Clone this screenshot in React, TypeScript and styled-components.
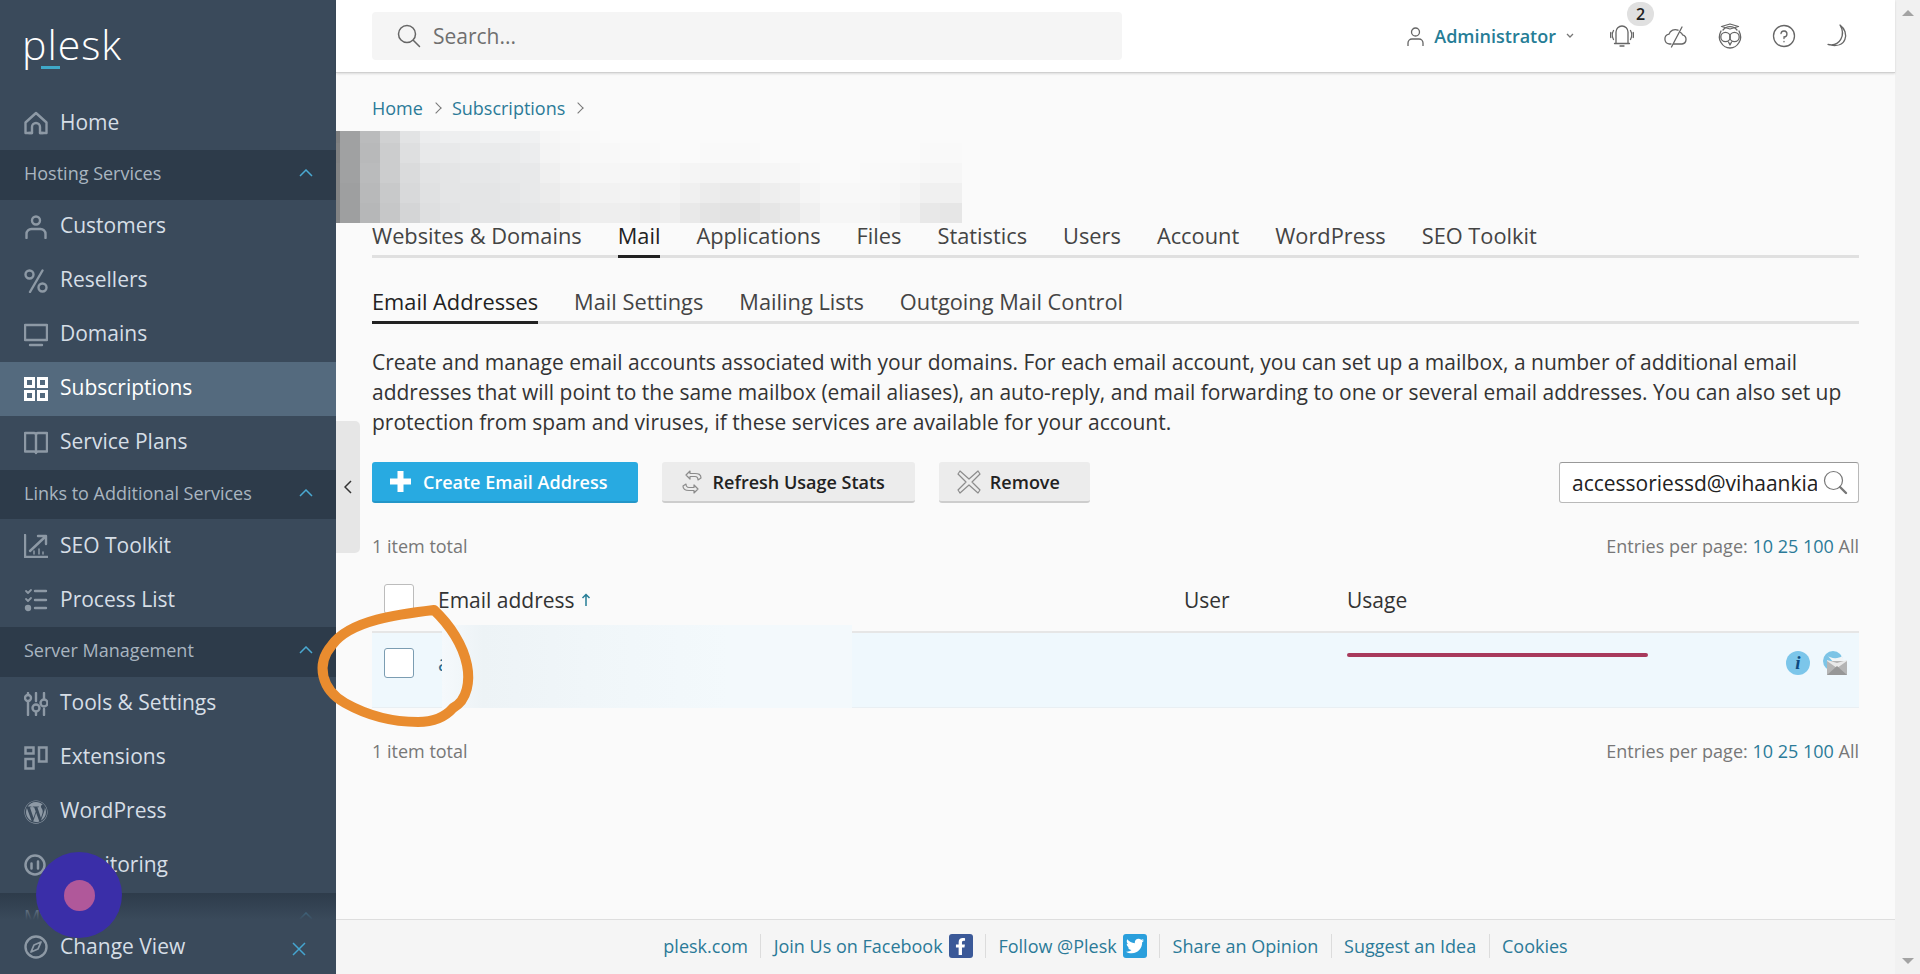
import styled, {createGlobalStyle} from 'styled-components';
import {FaFacebookF, FaTwitter, FaWordpress} from 'react-icons/fa';
import type {ReactNode} from 'react';

const GlobalStyle = createGlobalStyle`
	* {
		box-sizing: border-box;
	}

	html,
	body {
		margin: 0;
		height: 100%;
		overflow: hidden;
	}

	body {
		font-family: 'Open Sans', 'Liberation Sans', sans-serif;
		font-size: 21px;
		line-height: 30px;
		color: #222;
		background: #fafafa;
	}
`;

const Svg = ({size = 24, children}: {size?: number; children: ReactNode}) => (
	<svg
		width={size}
		height={size}
		viewBox="0 0 24 24"
		fill="none"
		stroke="currentColor"
		strokeWidth="2.400"
		strokeLinecap="round"
		strokeLinejoin="round"
	>
		{children}
	</svg>
);

const HomeIcon = () => (
	<Svg>
		<path d="M1.500 11.500 12 2l10.500 9.500V22H16v-6a4 4 0 0 0-8 0v6H1.500z" />
		<path d="M5 22h3M16 22h3" />
	</Svg>
);
const CustomersIcon = () => (
	<Svg>
		<circle cx="12" cy="5.500" r="4" />
		<path d="M2.500 23v-4a5 5 0 0 1 5-5h9a5 5 0 0 1 5 5v4" />
	</Svg>
);
const PercentIcon = () => (
	<Svg>
		<circle cx="5.500" cy="5.500" r="4" />
		<circle cx="18.500" cy="18.500" r="4" />
		<path d="M18.500 1.500 6 23" />
	</Svg>
);
const MonitorIcon = () => (
	<Svg>
		<rect x="1" y="2" width="22" height="15" />
		<path d="M6 22h12" />
	</Svg>
);
const GridIcon = () => (
	<Svg>
		<g strokeWidth="3" strokeLinecap="butt" strokeLinejoin="miter">
			<rect x="1.500" y="1.500" width="8" height="8" />
			<rect x="14.500" y="1.500" width="8" height="8" />
			<rect x="1.500" y="14.500" width="8" height="8" />
			<rect x="14.500" y="14.500" width="8" height="8" />
		</g>
	</Svg>
);
const BookIcon = () => (
	<Svg>
		<path d="M1 2h9a2 2 0 0 1 2 2v18a2 2 0 0 0-2-1.500H1zM23 2h-9a2 2 0 0 0-2 2v18a2 2 0 0 1 2-1.500h9z" />
	</Svg>
);
const ChartIcon = () => (
	<Svg>
		<path d="M1 1v22h23" />
		<path d="M6 17 21 3M14 2h8v8" />
		<path d="M10 20v-3M15 20v-5M19 20v-2" strokeWidth="1.500" />
	</Svg>
);
const ChecklistIcon = () => (
	<Svg>
		<path d="m2 3 2 2 3-3M2 11l2 2 3-3" strokeWidth="1.800" />
		<circle cx="4" cy="20" r="2" fill="currentColor" />
		<path d="M11 3h11M11 12h11M11 20h11" />
	</Svg>
);
const SlidersIcon = () => (
	<Svg>
		<path d="M4 10v13M12 1v8M12 20v3M20 1v5M20 17v6M4 1v2" />
		<circle cx="4" cy="6" r="3" />
		<circle cx="12" cy="16" r="3.500" />
		<circle cx="20" cy="11" r="3.500" />
	</Svg>
);
const ExtensionsIcon = () => (
	<Svg>
		<g strokeWidth="2.500" strokeLinecap="butt" strokeLinejoin="miter">
			<rect x="1.500" y="1.500" width="8" height="6" />
			<rect x="1.500" y="13" width="8" height="9.500" />
			<rect x="15" y="1.500" width="7.500" height="14" />
		</g>
	</Svg>
);
const MonitoringIcon = () => (
	<Svg>
		<circle cx="11" cy="11" r="9.500" strokeWidth="2.500" />
		<path d="M7.500 9.500v5M14 7.500v7" strokeWidth="2.500" />
	</Svg>
);
const CompassIcon = () => (
	<Svg>
		<circle cx="12" cy="12" r="10.500" />
		<path d="m17 7-3 7-7 3 3-7z" strokeWidth="1.800" />
	</Svg>
);

type NavEntry =
	| {kind: 'item'; label: string; icon: ReactNode; active?: boolean}
	| {kind: 'section'; label: string};

const navEntries: NavEntry[] = [
	{kind: 'item', label: 'Home', icon: <HomeIcon />},
	{kind: 'section', label: 'Hosting Services'},
	{kind: 'item', label: 'Customers', icon: <CustomersIcon />},
	{kind: 'item', label: 'Resellers', icon: <PercentIcon />},
	{kind: 'item', label: 'Domains', icon: <MonitorIcon />},
	{kind: 'item', label: 'Subscriptions', icon: <GridIcon />, active: true},
	{kind: 'item', label: 'Service Plans', icon: <BookIcon />},
	{kind: 'section', label: 'Links to Additional Services'},
	{kind: 'item', label: 'SEO Toolkit', icon: <ChartIcon />},
	{kind: 'item', label: 'Process List', icon: <ChecklistIcon />},
	{kind: 'section', label: 'Server Management'},
	{kind: 'item', label: 'Tools & Settings', icon: <SlidersIcon />},
	{kind: 'item', label: 'Extensions', icon: <ExtensionsIcon />},
	{kind: 'item', label: 'WordPress', icon: <FaWordpress size={24} />},
	{kind: 'item', label: 'Monitoring', icon: <MonitoringIcon />},
	{kind: 'section', label: 'My Profile'},
];

const mainTabs = ['Websites & Domains', 'Mail', 'Applications', 'Files', 'Statistics', 'Users', 'Account', 'WordPress', 'SEO Toolkit'];
const subTabs = ['Email Addresses', 'Mail Settings', 'Mailing Lists', 'Outgoing Mail Control'];

// grey levels of the pixelated title, one line per column of 20px
const blurColumns = [
	[125, 128, 130, 130, 130],
	[160, 160, 160, 158, 158],
	[186, 184, 186, 184, 182],
	[208, 204, 204, 200, 198],
	[226, 222, 218, 216, 212],
	[236, 232, 226, 224, 222],
	[238, 232, 228, 228, 226],
	[238, 234, 230, 228, 228],
	[240, 234, 230, 228, 228],
	[240, 234, 232, 230, 228],
	[240, 236, 232, 232, 230],
	[246, 244, 240, 236, 232],
	[248, 246, 244, 240, 236],
	[249, 248, 246, 242, 238],
	[250, 248, 246, 242, 238],
	[250, 249, 246, 243, 238],
	[250, 249, 246, 242, 236],
	[250, 250, 247, 243, 238],
	[250, 250, 245, 240, 233],
	[250, 249, 244, 236, 228],
	[250, 249, 244, 234, 226],
	[250, 249, 245, 235, 226],
	[250, 250, 246, 238, 230],
	[250, 250, 247, 240, 234],
	[250, 250, 249, 245, 240],
	[250, 250, 250, 248, 246],
	[250, 250, 250, 248, 246],
	[250, 250, 249, 248, 246],
	[250, 250, 249, 247, 244],
	[250, 250, 248, 244, 240],
	[250, 249, 246, 240, 232],
	[250, 249, 246, 240, 230],
	[250, 249, 246, 240, 230],
];

const blurColor = (grey: number, column: number) => {
	const tint = column < 11 ? 2 : 0;
	return `rgb(${grey},${grey + tint / 2},${grey + tint})`;
};

const EntriesPerPage = () => (
	<Entries>
		Entries per page: <a>10</a> <a>25</a> <a>100</a> All
	</Entries>
);

function App() {
	return (
		<>
			<GlobalStyle />
			<Page>
				<Sidebar>
					<Nav>
						<Logo>
							plesk
							<LogoMark />
						</Logo>
						{navEntries.map(entry =>
							entry.kind === 'section' ? (
								<Section key={entry.label}>
									{entry.label}
									<svg width="14" height="8" viewBox="0 0 14 8" fill="none" stroke="currentColor" strokeWidth="1.500">
										<path d="m1 7 6-6 6 6" />
									</svg>
								</Section>
							) : (
								<Item key={entry.label} $active={entry.active}>
									<ItemIcon $active={entry.active}>{entry.icon}</ItemIcon>
									{entry.label}
								</Item>
							),
						)}
					</Nav>
					<SidebarFooter>
						<Item as="div">
							<ItemIcon>
								<CompassIcon />
							</ItemIcon>
							Change View
						</Item>
						<CloseIcon width="14" height="14" viewBox="0 0 14 14" fill="none" stroke="currentColor" strokeWidth="1.500">
							<path d="m1 1 12 12M13 1 1 13" />
						</CloseIcon>
					</SidebarFooter>
				</Sidebar>

				<Main>
					<Header>
						<SearchBox>
							<svg width="26" height="26" viewBox="0 0 26 26" fill="none" stroke="#666" strokeWidth="1.500" strokeLinecap="round">
								<circle cx="11" cy="11" r="8.500" />
								<path d="m17.500 17.500 6 6" />
							</svg>
							Search...
						</SearchBox>
						<HeaderRight>
							<UserMenu>
								<svg width="17" height="19" viewBox="0 0 17 19" fill="none" stroke="#666" strokeWidth="1.300">
									<circle cx="8.500" cy="5" r="4" />
									<path d="M1 19v-3a4 4 0 0 1 4-4h7a4 4 0 0 1 4 4v3" />
								</svg>
								<UserName>Administrator</UserName>
								<svg width="8" height="6" viewBox="0 0 8 6" fill="none" stroke="#777" strokeWidth="1.300">
									<path d="m1 1 3 3 3-3" />
								</svg>
							</UserMenu>
							<HeaderIcons>
								<BellWrap>
									<svg width="24" height="24" viewBox="0 0 24 24" fill="none" stroke="#666" strokeWidth="1.300" strokeLinecap="round">
										<path d="M6 19V8a6 6 0 0 1 12 0v11M4.500 19.500h15M10 22h4" />
										<path d="M3.500 6.500a9 9 0 0 0 0 9M.8 8.500a7 7 0 0 0 0 5M20.500 6.500a9 9 0 0 1 0 9M23.200 8.500a7 7 0 0 1 0 5" />
									</svg>
									<Badge>2</Badge>
								</BellWrap>
								<svg width="24" height="24" viewBox="0 0 24 24" fill="none" stroke="#666" strokeWidth="1.300" strokeLinecap="round">
									<path d="M7 20H5.500a5 5 0 0 1-.5-9.900A6.500 6.500 0 0 1 14 6.200M16.500 8.500a5 5 0 0 1 2 2.300 4.700 4.700 0 0 1-.5 9.200H9.500" />
									<path d="M18 3 7.500 23" />
								</svg>
								<svg width="24" height="26" viewBox="0 0 24 26" fill="none" stroke="#666" strokeWidth="1.300" strokeLinecap="round" strokeLinejoin="round">
									<path d="M3.500 3.500 12 1l8.500 2.500L12 6zM5 7a9 9 0 0 1 14 0" />
									<path d="M3 8c-2 4-2.500 8 0 11.500C5 23 9 25 12 25s7-2 9-5.500c2.500-3.500 2-7.500 0-11.500" />
									<circle cx="7.500" cy="14" r="4.700" />
									<circle cx="16.500" cy="14" r="4.700" />
									<path d="m10.500 19 1.500 3 1.500-3" />
								</svg>
								<HelpIcon>
									<svg width="24" height="24" viewBox="0 0 24 24" fill="none" stroke="#666" strokeWidth="1.300" strokeLinecap="round">
										<circle cx="12" cy="12" r="10.500" />
										<path d="M9 9.500A3 3 0 1 1 12 13v1.500M12 17.500v.3" />
									</svg>
								</HelpIcon>
								<svg width="24" height="24" viewBox="0 0 24 24" fill="none" stroke="#666" strokeWidth="1.300" strokeLinejoin="round">
									<path d="M14 1C24 8 21 26 2 20.500 14 23 20 11 14 1z" />
								</svg>
							</HeaderIcons>
						</HeaderRight>
					</Header>

					<Content>
						<Breadcrumbs>
							<a>Home</a>
							<Crumb />
							<a>Subscriptions</a>
							<Crumb />
						</Breadcrumbs>

						<BlurredTitle>
							{blurColumns.map((column, x) =>
								column.map((grey, y) => <span key={`${x}-${y}`} style={{background: blurColor(grey, x)}} />),
							)}
						</BlurredTitle>

						<Tabs>
							{mainTabs.map(tab => (
								<Tab key={tab} $active={tab === 'Mail'}>
									{tab}
								</Tab>
							))}
						</Tabs>
						<SubTabs>
							{subTabs.map(tab => (
								<Tab key={tab} $active={tab === 'Email Addresses'}>
									{tab}
								</Tab>
							))}
						</SubTabs>

						<Intro>
							Create and manage email accounts associated with your domains. For each email account, you can set up a mailbox, a number of additional email
							addresses that will point to the same mailbox (email aliases), an auto-reply, and mail forwarding to one or several email addresses. You can also set up
							protection from spam and viruses, if these services are available for your account.
						</Intro>

						<Toolbar>
							<PrimaryButton>
								<svg width="21" height="21" viewBox="0 0 21 21" fill="#fff">
									<path d="M7.500 0h6v7.500H21v6h-7.500V21h-6v-7.500H0v-6h7.500z" />
								</svg>
								Create Email Address
							</PrimaryButton>
							<Button>
								<svg width="24" height="24" viewBox="0 0 24 24" fill="none" stroke="#8c8c8c" strokeWidth="1.200" strokeLinejoin="round">
									<path d="M10 1 6 5l4 4V6.500h5c2 0 3 1.500 3 3.500l3-2c0-4-2.500-4.500-6-4.500h-5z" />
									<path d="m14 23 4-4-4-4v2.500H9c-2 0-3-1.500-3-3.500l-3 2c0 4 2.500 4.500 6 4.500h5z" />
								</svg>
								Refresh Usage Stats
							</Button>
							<Button>
								<svg width="24" height="24" viewBox="0 0 24 24" fill="none" stroke="#8c8c8c" strokeWidth="1.200" strokeLinejoin="round">
									<path d="M3 1 12 9l9-8 2 3-8 8 8 8-2 3-9-8-9 8-2-3 8-8-8-8z" />
								</svg>
								Remove
							</Button>
							<FilterBox>
								<FilterInput readOnly value="accessoriessd@vihaankia" />
								<svg width="25" height="25" viewBox="0 0 25 25" fill="none" stroke="#777" strokeWidth="1.200" strokeLinecap="round">
									<circle cx="10.500" cy="10.500" r="9" />
									<path d="m17 17 6 6" strokeWidth="2.400" />
								</svg>
							</FilterBox>
						</Toolbar>

						<ListMeta>
							<span>1 item total</span>
							<EntriesPerPage />
						</ListMeta>

						<TableHead>
							<HeadCheckbox />
							<HeadLabel>
								Email address
								<svg width="10" height="14" viewBox="0 0 10 14" fill="none" stroke="#267d96" strokeWidth="1.500">
									<path d="M5 13V2M1.500 5 5 1.500 8.500 5" />
								</svg>
							</HeadLabel>
							<span>User</span>
							<span>Usage</span>
						</TableHead>
						<TableRow>
							<Checkbox $row />
							<EmailLink>a</EmailLink>
							<span />
							<UsageBar />
							<RowIcons>
								<InfoIcon>i</InfoIcon>
								<svg width="24" height="24" viewBox="0 0 24 24">
									<circle cx="10" cy="10" r="10" fill="#7cc4e6" />
									<path d="M4 4c3 4 12 4 15 1l3 7-9 2z" fill="#f1f5f7" />
									<path d="M4 10h20v14H4z" fill="#b5b5b5" />
									<path d="M4 10l10 7 10-7v-1L14 12 4 9z" fill="#e9e9e9" />
									<path d="M4 24l10-9 10 9z" fill="#979797" />
								</svg>
							</RowIcons>
							<RowBlur />
						</TableRow>

						<BottomMeta>
							<span>1 item total</span>
							<EntriesPerPage />
						</BottomMeta>
					</Content>

					<Footer>
						<FooterLink>plesk.com</FooterLink>
						<FooterLink>
							Join Us on Facebook
							<Social $color="#3b5998">
								<FaFacebookF size={17} />
							</Social>
						</FooterLink>
						<FooterLink>
							Follow @Plesk
							<Social $color="#2a9fdc">
								<FaTwitter size={18} />
							</Social>
						</FooterLink>
						<FooterLink>Share an Opinion</FooterLink>
						<FooterLink>Suggest an Idea</FooterLink>
						<FooterLink>Cookies</FooterLink>
					</Footer>

					<SidebarToggle>
						<svg width="8" height="14" viewBox="0 0 8 14" fill="none" stroke="#333" strokeWidth="1.500">
							<path d="M7 1 1 7l6 6" />
						</svg>
					</SidebarToggle>
				</Main>

				<Scrollbar>
					<ScrollArrow />
					<ScrollArrow $down />
				</Scrollbar>

				<Annotation width="1920" height="974" viewBox="0 0 1920 974" fill="none">
					<path
						d="M434 610C400 614 350 620 332 645 315 665 322 690 345 703 370 717 395 722 418 722 436 722 446 716 453 708 468 700 470 680 467 665 463 645 450 625 434 610"
						stroke="#e98c2f"
						strokeWidth="10"
						strokeLinecap="round"
					/>
				</Annotation>
				<RecordDot />
			</Page>
		</>
	);
}

export default App;

const Page = styled.div`
	position: relative;
	display: flex;
	width: 1920px;
	height: 974px;
	overflow: hidden;
`;

const Sidebar = styled.aside`
	position: relative;
	width: 336px;
	flex-shrink: 0;
	background: #3a4a5b;
	color: #d6dee6;
`;

const Nav = styled.nav`
	height: 974px;
`;

const Logo = styled.div`
	position: relative;
	height: 96px;
	padding: 19px 0 0 22px;
	font-size: 41px;
	line-height: 50px;
	font-weight: 300;
	letter-spacing: 1px;
	color: #fff;
`;

const LogoMark = styled.span`
	position: absolute;
	left: 41px;
	top: 66px;
	width: 19px;
	height: 3px;
	background: #3fa9c9;
`;

const Item = styled.a<{$active?: boolean}>`
	display: flex;
	align-items: center;
	gap: 12px;
	height: 54px;
	padding: 0 0 3px 24px;
	font-size: 21px;
	font-weight: 500;
	color: ${props => (props.$active ? '#fff' : '#d6dee6')};
	background: ${props => (props.$active ? '#546a7e' : 'transparent')};
`;

const ItemIcon = styled.span<{$active?: boolean}>`
	display: flex;
	width: 24px;
	height: 24px;
	margin-top: 3px;
	color: ${props => (props.$active ? '#fff' : '#8d99a5')};
`;

const Section = styled.div`
	display: flex;
	align-items: center;
	justify-content: space-between;
	height: 49.500px;
	padding: 0 23px 3px 24px;
	font-size: 18px;
	color: #a9b5c0;
	background: #2d3b4a;

	svg {
		color: #4aa9d2;
	}
`;

const SidebarFooter = styled.div`
	position: absolute;
	left: 0;
	right: 0;
	bottom: 0;
	height: 54px;
	background: #3a4a5b;

	&::before {
		content: '';
		position: absolute;
		left: 0;
		right: 0;
		bottom: 100%;
		height: 28px;
		background: linear-gradient(rgba(58, 74, 91, 0), #3a4a5b);
	}
`;

const CloseIcon = styled.svg`
	position: absolute;
	right: 30px;
	top: 22px;
	color: #45a5d0;
`;

const Main = styled.div`
	position: relative;
	flex: 1;
	min-width: 0;
	display: flex;
	flex-direction: column;
`;

const Header = styled.header`
	height: 73px;
	flex-shrink: 0;
	display: flex;
	align-items: center;
	justify-content: space-between;
	padding: 0 45px 0 36px;
	background: #fff;
	border-bottom: 1px solid #d0d0d0;
	box-shadow: 0 1px 2px rgba(0, 0, 0, 0.12);
	z-index: 1;
`;

const SearchBox = styled.div`
	display: flex;
	align-items: center;
	gap: 11px;
	width: 750px;
	height: 48px;
	padding-left: 24px;
	background: #f5f5f5;
	border-radius: 4px;
	color: #6f6f6f;
`;

const HeaderRight = styled.div`
	display: flex;
	align-items: center;
	gap: 36px;
`;

const UserMenu = styled.div`
	display: flex;
	align-items: center;
	gap: 10px;
`;

const UserName = styled.span`
	font-size: 18px;
	font-weight: 600;
	color: #267d96;
`;

const HeaderIcons = styled.div`
	display: flex;
	align-items: center;
	gap: 30px;
`;

const BellWrap = styled.div`
	position: relative;
	display: flex;
`;

const Badge = styled.span`
	position: absolute;
	left: 17px;
	top: -22px;
	width: 27px;
	height: 24px;
	border-radius: 12px;
	background: #e0e0e0;
	font-size: 16px;
	line-height: 24px;
	font-weight: 600;
	text-align: center;
`;

const HelpIcon = styled.span`
	display: flex;
`;

const Content = styled.main`
	flex: 1;
	min-height: 0;
	padding: 20px 36px 0;
	background: #fafafa;
`;

const Breadcrumbs = styled.div`
	display: flex;
	align-items: center;
	gap: 12px;
	height: 30px;
	font-size: 18px;

	a {
		color: #2b7a98;
	}
`;

const Crumb = styled.span`
	width: 8px;
	height: 8px;
	margin-left: -3px;
	border-top: 1px solid #777;
	border-right: 1px solid #777;
	transform: rotate(45deg);
`;

const BlurredTitle = styled.div`
	display: grid;
	grid-template-columns: 4px repeat(32, 20px);
	grid-template-rows: 12px repeat(4, 20px);
	grid-auto-flow: column;
	width: 626px;
	height: 92px;
	margin: 8px 0 0 -36px;
	overflow: hidden;
`;

const Tabs = styled.div`
	display: flex;
	gap: 36px;
	border-bottom: 3px solid #e0e0e0;
	font-size: 21.800px;
`;

const SubTabs = styled(Tabs)`
	margin-top: 31px;
`;

const Tab = styled.a<{$active?: boolean}>`
	height: 32px;
	margin-bottom: -3px;
	padding-bottom: 6px;
	line-height: 26px;
	font-weight: 500;
	color: ${props => (props.$active ? '#222' : '#444')};
	${props => (props.$active ? 'box-shadow: inset 0 -3px 0 #222; height: 35px;' : '')}
`;

const Intro = styled.p`
	margin: 23px 0 0;
	color: #333;
`;

const Toolbar = styled.div`
	display: flex;
	align-items: center;
	gap: 24px;
	height: 41px;
	margin-top: 25px;
`;

const Button = styled.button`
	display: flex;
	align-items: center;
	gap: 9px;
	height: 41px;
	padding: 0 30px 0 18px;
	border: 0;
	border-bottom: 2px solid #cdcdcd;
	border-radius: 3px;
	background: #ececec;
	color: #222;
	font: 600 18px 'Open Sans', sans-serif;
`;

const PrimaryButton = styled(Button)`
	border-bottom: 2px solid #2496c8;
	background: #28aae1;
	color: #fff;
	gap: 12px;
`;

const FilterBox = styled.div`
	display: flex;
	align-items: center;
	width: 300px;
	height: 41px;
	margin-left: auto;
	padding: 0 10px 0 12px;
	background: #fff;
	border: 1px solid #b9b9b9;
	border-top-color: #999;
	border-radius: 3px;
`;

const FilterInput = styled.input`
	flex: 1;
	min-width: 0;
	margin-right: 6px;
	padding: 0;
	border: 0;
	outline: 0;
	background: transparent;
	color: #222;
	font: 21px 'Open Sans', sans-serif;
`;

const ListMeta = styled.div`
	display: flex;
	justify-content: space-between;
	height: 24px;
	margin-top: 31px;
	font-size: 18px;
	line-height: 24px;
	color: #777;
`;

const Entries = styled.span`
	a {
		color: #2b7a98;
	}
`;

const BottomMeta = styled(ListMeta)`
	margin-top: 31px;
`;

const TableHead = styled.div`
	display: grid;
	grid-template-columns: 54px 746px 163px 1fr;
	align-items: center;
	height: 64px;
	margin-top: 11px;
	padding-left: 12px;
	border-bottom: 2px solid #e6e6e6;
	color: #333;
`;

const HeadLabel = styled.span`
	display: flex;
	align-items: center;
	gap: 6px;
`;

const TableRow = styled.div`
	position: relative;
	display: grid;
	grid-template-columns: 54px 746px 163px 301px 1fr;
	align-items: start;
	height: 75px;
	padding-left: 12px;
	background: #eff8fd;
	border-bottom: 1px solid #e9eff3;
`;

const Checkbox = styled.span<{$row?: boolean}>`
	display: block;
	width: 30px;
	height: 30px;
	margin-top: ${props => (props.$row ? '15px' : '0')};
	background: #fff;
	border: 1px solid ${props => (props.$row ? '#7b9db2' : '#bcbcbc')};
	border-radius: 3px;
`;

const HeadCheckbox = styled(Checkbox)`
	margin-top: -3px;
`;

const EmailLink = styled.a`
	margin-top: 15px;
	color: #2b6c8f;
`;

const UsageBar = styled.span`
	width: 301px;
	height: 4px;
	margin-top: 20px;
	border-radius: 2px;
	background: #a83a5c;
`;

const RowIcons = styled.div`
	display: flex;
	justify-content: flex-end;
	gap: 13px;
	margin-top: 18px;
	padding-right: 12px;
`;

const InfoIcon = styled.span`
	width: 24px;
	height: 24px;
	border-radius: 50%;
	background: #7cc6ea;
	color: #0d4a80;
	font: italic bold 19px/24px 'Liberation Serif', serif;
	text-align: center;
`;

const RowBlur = styled.div`
	position: absolute;
	left: 70px;
	top: -8px;
	width: 410px;
	height: 83px;
	background: linear-gradient(90deg, #f5f9fc 0%, #edf3f6 10%, #f0f6f9 35%, #f3f9fc 70%, #f3f9fc 100%);
`;

const Footer = styled.footer`
	height: 55px;
	flex-shrink: 0;
	display: flex;
	align-items: center;
	justify-content: center;
	padding-bottom: 2px;
	background: #f5f5f5;
	border-top: 1px solid #dedede;
	font-size: 18px;
`;

const FooterLink = styled.a`
	display: flex;
	align-items: center;
	gap: 6px;
	height: 24px;
	padding: 0 12.400px;
	color: #2b7a98;

	&:not(:last-child) {
		border-right: 1px solid #dcdcdc;
	}
`;

const Social = styled.span<{$color: string}>`
	display: flex;
	align-items: center;
	justify-content: center;
	width: 24px;
	height: 24px;
	border-radius: 3px;
	background: ${props => props.$color};
	color: #fff;
`;

const SidebarToggle = styled.div`
	position: absolute;
	left: 0;
	top: 421px;
	display: flex;
	align-items: center;
	justify-content: center;
	width: 24px;
	height: 132px;
	background: #e6e6e6;
	border-radius: 0 5px 5px 0;
`;

const Scrollbar = styled.div`
	width: 25px;
	flex-shrink: 0;
	display: flex;
	flex-direction: column;
	justify-content: space-between;
	align-items: center;
	padding: 10px 0;
	background: #f1f1f1;
`;

const ScrollArrow = styled.span<{$down?: boolean}>`
	width: 0;
	height: 0;
	border-left: 6px solid transparent;
	border-right: 6px solid transparent;
	${props => (props.$down ? 'border-top: 6px solid #a3a3a3;' : 'border-bottom: 6px solid #a3a3a3;')}
`;

const Annotation = styled.svg`
	position: absolute;
	left: 0;
	top: 0;
	pointer-events: none;
`;

const RecordDot = styled.div`
	position: absolute;
	left: 36px;
	top: 852px;
	display: flex;
	align-items: center;
	justify-content: center;
	width: 86px;
	height: 86px;
	border-radius: 50%;
	background: #3a2ea8;

	&::after {
		content: '';
		width: 31px;
		height: 31px;
		border-radius: 50%;
		background: #b0589a;
	}
`;
